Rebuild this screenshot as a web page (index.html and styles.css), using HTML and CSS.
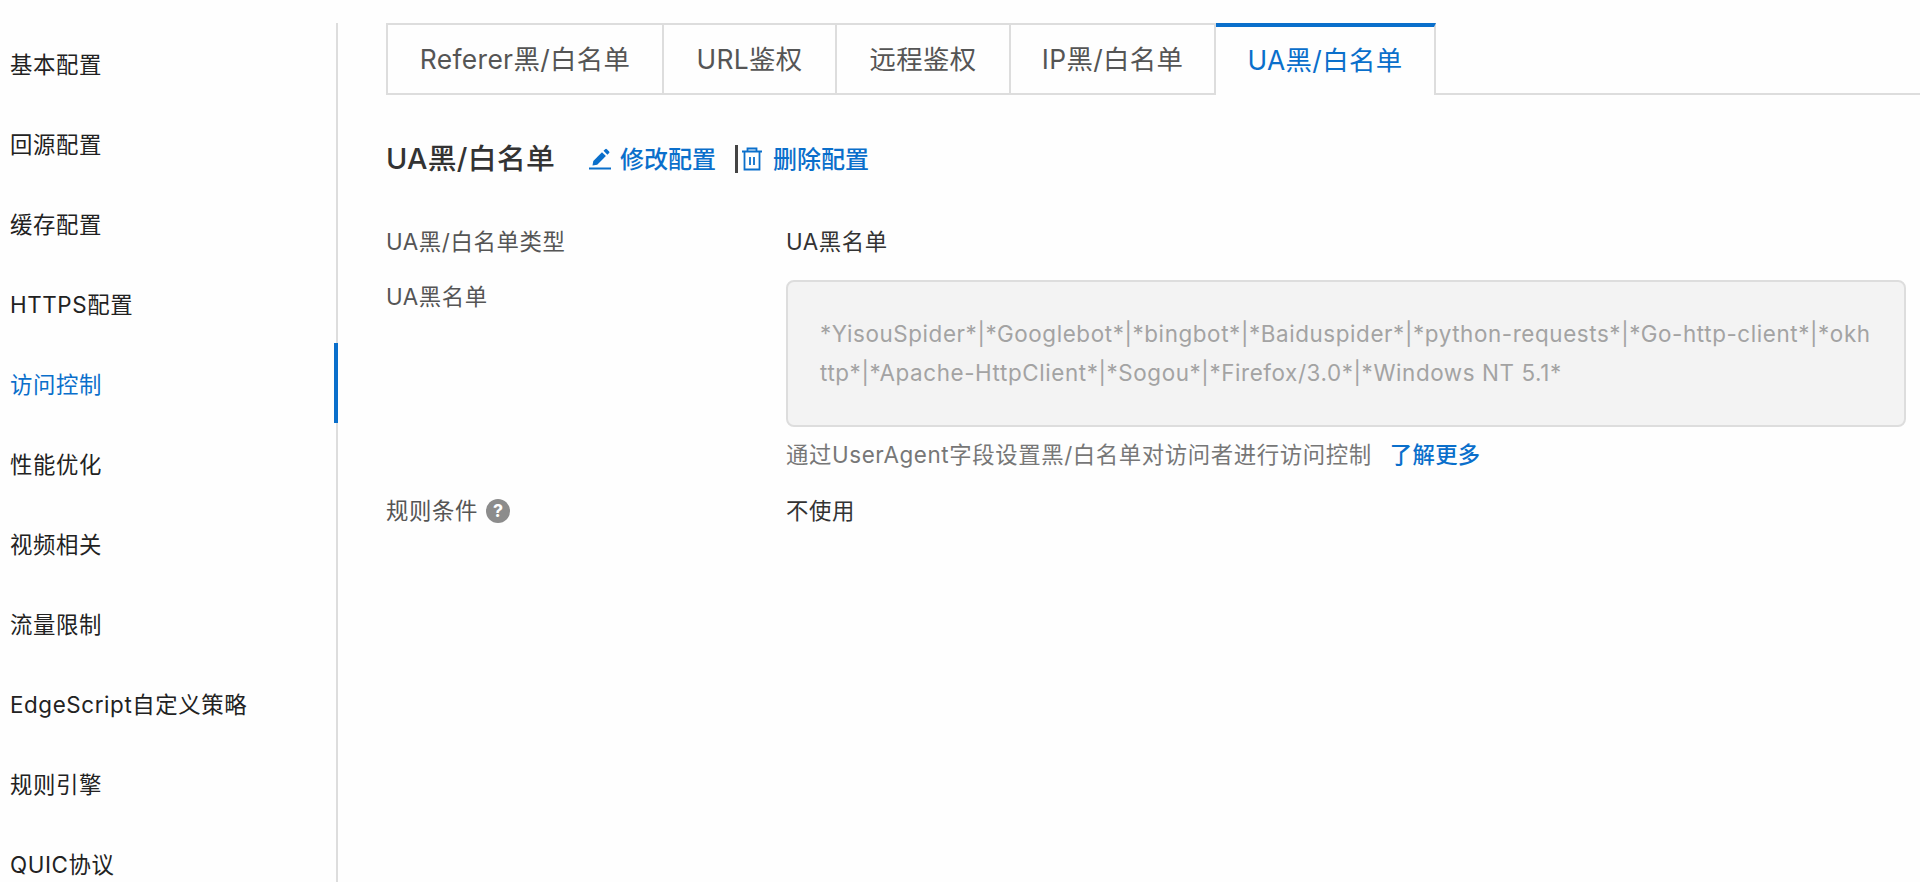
FILE: index.html
```html
<!DOCTYPE html>
<html lang="zh-CN">
<head>
<meta charset="utf-8">
<title>UA黑/白名单</title>
<link rel="stylesheet" href="styles.css">
</head>
<body>
<div class="page">
  <nav class="side">
    <a class="side-item">基本配置</a>
    <a class="side-item">回源配置</a>
    <a class="side-item">缓存配置</a>
    <a class="side-item">HTTPS配置</a>
    <a class="side-item active">访问控制</a>
    <a class="side-item">性能优化</a>
    <a class="side-item">视频相关</a>
    <a class="side-item">流量限制</a>
    <a class="side-item">EdgeScript自定义策略</a>
    <a class="side-item">规则引擎</a>
    <a class="side-item">QUIC协议</a>
  </nav>
  <main class="main">
    <div class="tabs">
      <div class="tab t1">Referer黑/白名单</div>
      <div class="tab t2">URL鉴权</div>
      <div class="tab t3">远程鉴权</div>
      <div class="tab t4">IP黑/白名单</div>
      <div class="tab t5 on">UA黑/白名单</div>
    </div>
    <div class="head">
      <h2 class="title">UA黑/白名单</h2>
      <a class="act edit">
        <svg class="ico" viewBox="0 0 22 22" width="22" height="22"><path d="M0 20.500h22" stroke="#0a6fcb" stroke-width="2" fill="none"/><path d="M3.500 17.500l.8-4.600L13 4.200l3.900 3.900-8.700 8.700z" fill="#0a6fcb"/><path d="M14.500 2.800l1.700-1.600a1.200 1.200 0 0 1 1.700 0l2.200 2.200a1.200 1.200 0 0 1 0 1.700l-1.700 1.600z" fill="#0a6fcb"/></svg>
        <span>修改配置</span>
      </a>
      <span class="sep"></span>
      <a class="act del">
        <svg class="ico" viewBox="0 0 20 24" width="20" height="24"><path d="M0 4.500h20M5.500 4.500V1.500h9v3M2.500 4.500v18h15v-18M8 10v8M12 10v8" stroke="#0a6fcb" stroke-width="1.800" fill="none"/></svg>
        <span>删除配置</span>
      </a>
    </div>
    <div class="rows">
      <div class="row r1"><div class="lab">UA黑/白名单类型</div><div class="val">UA黑名单</div></div>
      <div class="row r2">
        <div class="lab">UA黑名单</div>
        <div class="val">
          <div class="box">*YisouSpider*|*Googlebot*|*bingbot*|*Baiduspider*|*python-requests*|*Go-http-client*|*okhttp*|*Apache-HttpClient*|*Sogou*|*Firefox/3.0*|*Windows NT 5.1*</div>
          <div class="hint">通过UserAgent字段设置黑/白名单对访问者进行访问控制<a class="more">了解更多</a></div>
        </div>
      </div>
      <div class="row r3"><div class="lab">规则条件<span class="q">?</span></div><div class="val">不使用</div></div>
    </div>
  </main>
</div>
</body>
</html>
```
FILE: styles.css
```css
html, body { margin: 0; height: 100%; overflow: hidden; background: #fefefe; }
body { font-family: Inter, "Noto Sans CJK SC", sans-serif; font-size: 22.4px; letter-spacing: 0.6px; color: #333; }
a { color: inherit; text-decoration: none; }
.page { display: flex; height: 882px; padding-top: 23px; box-sizing: border-box; }
.side { width: 338px; flex: none; box-sizing: border-box; border-right: 2px solid #ddd; }
.side-item { display: flex; align-items: center; height: 80px; padding-left: 10px; margin-right: -2px; border-right: 4px solid transparent; color: #222; white-space: nowrap; }
.side-item.active { color: #0a6fcb; border-right-color: #0a6fcb; }
.main { flex: 1; padding-left: 48px; padding-right: 14px; min-width: 0; }
.tabs { display: flex; height: 72px; margin-right: -14px; border-bottom: 2px solid #ddd; box-sizing: border-box; }
.tab { height: 72px; box-sizing: border-box; display: flex; align-items: center; justify-content: center; padding-bottom: 3px; font-size: 26.4px; letter-spacing: 0.35px; color: #555; border: 2px solid #ddd; border-left: 0; background: #fefefe; }
.t1 { width: 278px; border-left: 2px solid #ddd; }
.t2 { width: 173px; }
.t3 { width: 174px; }
.t4 { width: 205px; }
.t5 { width: 220px; }
.tab.on { color: #0a6fcb; border-top: 4px solid #0a6fcb; border-bottom: 0; padding-bottom: 6px; }
.head { display: flex; align-items: center; height: 34px; margin-top: 47px; }
.title { margin: 0 34px 0 0; font-size: 28.8px; font-weight: 500; letter-spacing: 0.3px; color: #333; line-height: 34px; }
.act { display: flex; align-items: center; color: #0a6fcb; font-size: 24px; letter-spacing: 0; font-weight: 500; }
.act span { padding-bottom: 4px; }
.edit .ico { margin-right: 9px; }
.del .ico { margin-right: 11px; }
.sep { width: 3px; height: 28px; background: #444; margin: 0 4px 0 19px; }
.rows { margin-top: 49px; }
.row { display: flex; }
.lab { width: 400px; flex: none; color: #555; line-height: 34px; display: flex; align-items: center; align-self: flex-start; }
.val { flex: 1; min-width: 0; line-height: 34px; color: #333; }
.r2 { margin-top: 21px; }
.r3 { margin-top: 22px; }
.box { height: 147px; box-sizing: border-box; padding: 32px 32px 0; border: 2px solid #ddd; border-radius: 8px; background: #f3f3f3; color: #a3a3a3; line-height: 39px; word-break: break-all; }
.hint { margin-top: 11px; color: #777; line-height: 34px; }
.more { color: #0a6fcb; font-weight: 500; margin-left: 18px; letter-spacing: 0.3px; }
.q { display: inline-flex; align-items: center; justify-content: center; width: 24px; height: 24px; margin-left: 8px; border-radius: 50%; background: #8c8c8c; color: #fff; font-size: 18px; font-weight: 700; letter-spacing: 0; line-height: 1; }
```
